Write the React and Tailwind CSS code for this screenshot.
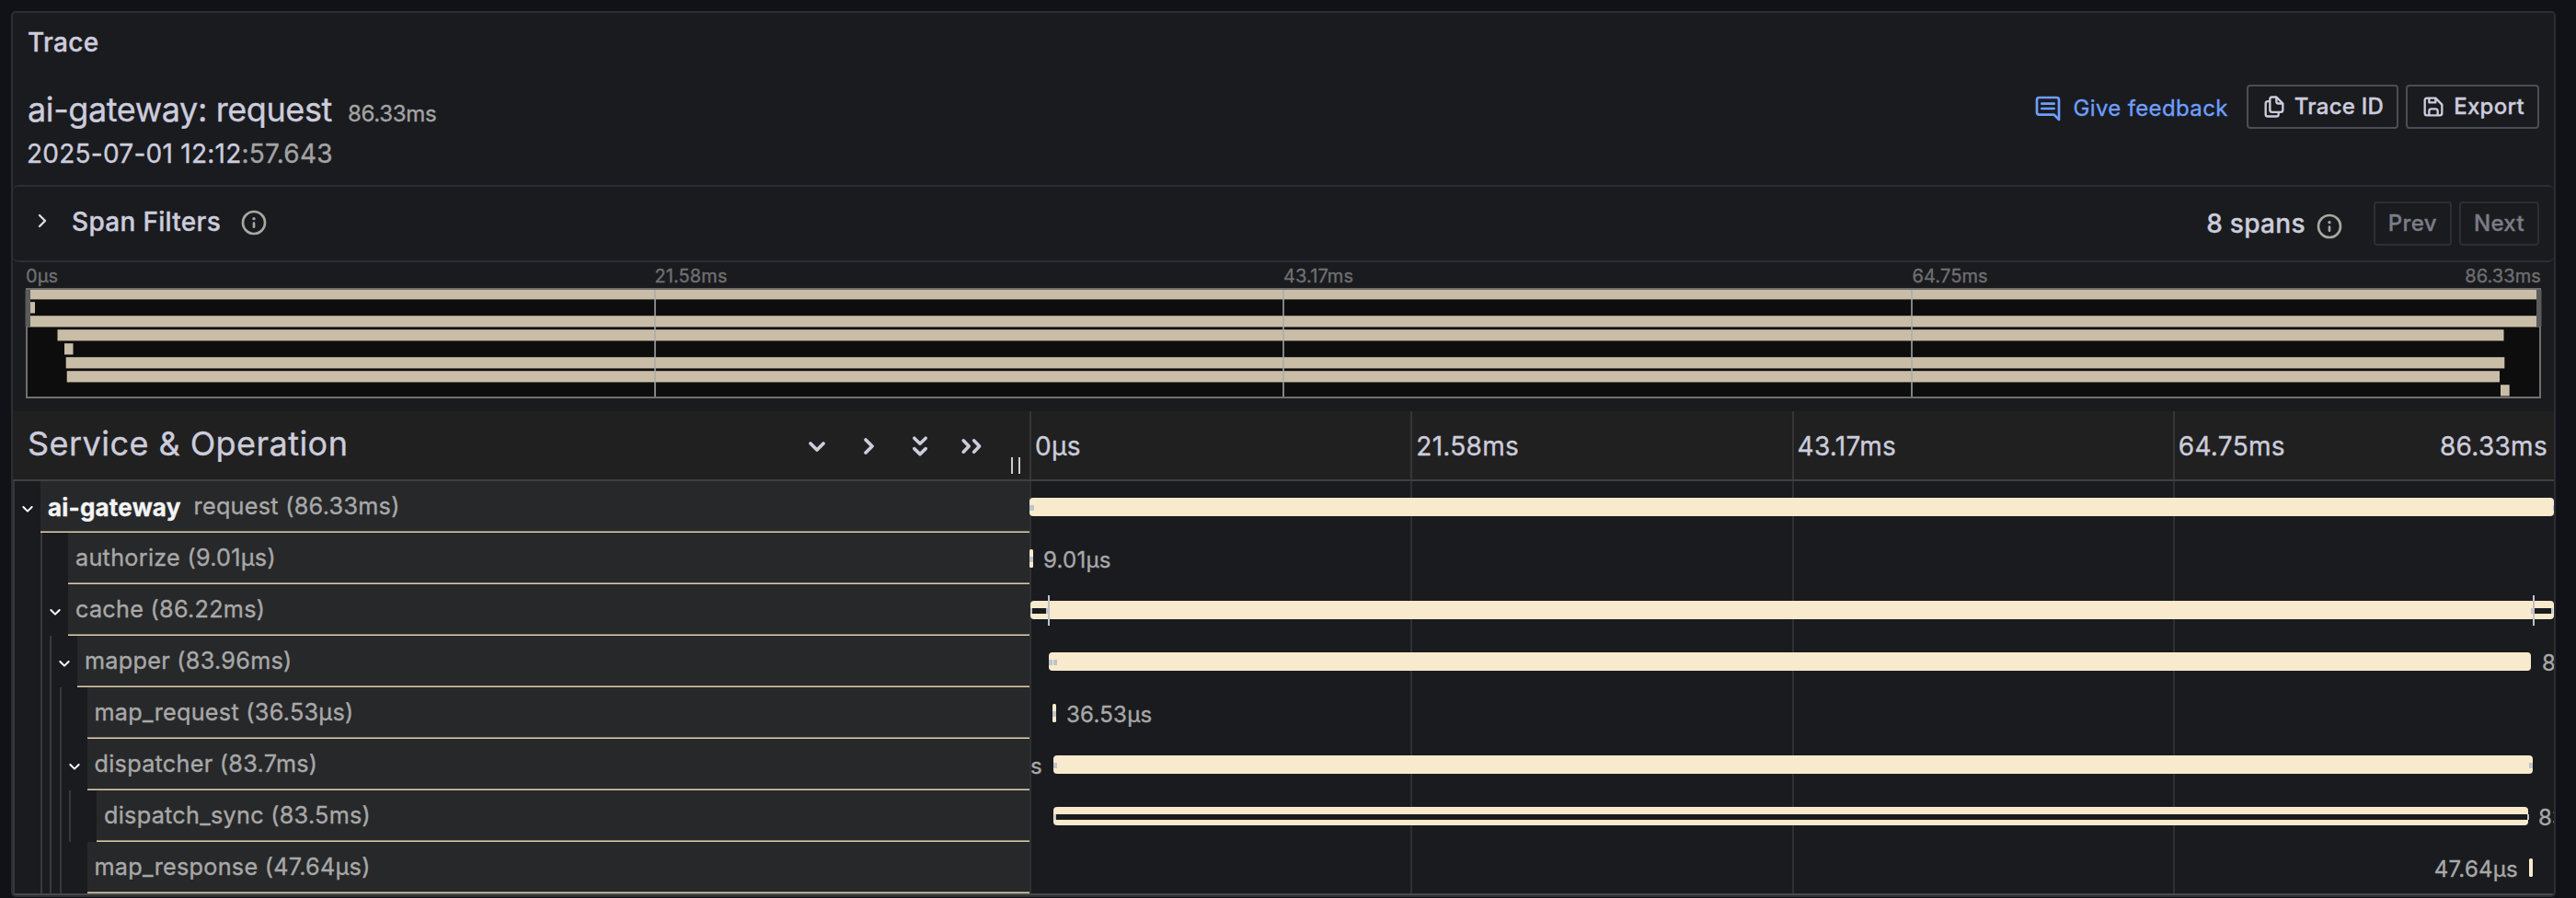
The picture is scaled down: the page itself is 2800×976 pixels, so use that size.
import React from "react";

const ANGLES = {
  down: "M5 9 L12 16 L19 9",
  right: "M9 5 L16 12 L9 19",
  thin: "M9 6 L15 12 L9 18",
};

function Angle({ dir, className, width = 3 }) {
  return (
    <svg viewBox="0 0 24 24" className={className} fill="none" stroke="currentColor" strokeWidth={width} strokeLinecap="round" strokeLinejoin="round">
      <path d={ANGLES[dir]} />
    </svg>
  );
}

function Glyph({ d, className }) {
  return (
    <svg viewBox="0 0 24 24" className={className} fill="currentColor">
      <path d={d} />
    </svg>
  );
}

const INFO =
  "M12,2A10,10,0,1,0,22,12,10,10,0,0,0,12,2Zm0,18a8,8,0,1,1,8-8A8,8,0,0,1,12,20Zm0-8.5a1,1,0,0,0-1,1v3a1,1,0,0,0,2,0v-3A1,1,0,0,0,12,11.5Zm0-4a1.25,1.25,0,1,0,1.25,1.25A1.25,1.25,0,0,0,12,7.5Z";
const COMMENT =
  "M17,7H7A1,1,0,0,0,7,9H17a1,1,0,0,0,0-2Zm0,4H7a1,1,0,0,0,0,2H17a1,1,0,0,0,0-2Zm2-9H5A3,3,0,0,0,2,5V15a3,3,0,0,0,3,3H16.59l3.7,3.71A1,1,0,0,0,21,22a.84.84,0,0,0,.38-.08A1,1,0,0,0,22,21V5A3,3,0,0,0,19,2Zm1,16.59-2.29-2.3A1,1,0,0,0,17,16H5a1,1,0,0,1-1-1V5A1,1,0,0,1,5,4H19a1,1,0,0,1,1,1Z";
const COPY =
  "M21,8.94a1.31,1.31,0,0,0-.06-.27l0-.09a1.07,1.07,0,0,0-.19-.28h0l-6-6h0a1.07,1.07,0,0,0-.28-.19.32.32,0,0,0-.09,0A.88.88,0,0,0,14.05,2H10A3,3,0,0,0,7,5V6H6A3,3,0,0,0,3,9V19a3,3,0,0,0,3,3h8a3,3,0,0,0,3-3V18h1a3,3,0,0,0,3-3V9S21,9,21,8.94ZM15,5.41,17.59,8H16a1,1,0,0,1-1-1ZM15,19a1,1,0,0,1-1,1H6a1,1,0,0,1-1-1V9A1,1,0,0,1,6,8H7v7a3,3,0,0,0,3,3h5Zm4-4a1,1,0,0,1-1,1H10a1,1,0,0,1-1-1V5a1,1,0,0,1,1-1h3V7a3,3,0,0,0,3,3h3Z";
const SAVE =
  "M20.71,9.29l-6-6a1,1,0,0,0-.32-.21A1.09,1.09,0,0,0,14,3H6A3,3,0,0,0,3,6V18a3,3,0,0,0,3,3H18a3,3,0,0,0,3-3V10A1,1,0,0,0,20.71,9.29ZM9,5h4V7H9Zm6,14H9V16a1,1,0,0,1,1-1h4a1,1,0,0,1,1,1Zm4-1a1,1,0,0,1-1,1H17V16a3,3,0,0,0-3-3H10a3,3,0,0,0-3,3v3H6a1,1,0,0,1-1-1V6A1,1,0,0,1,6,5H7V8A1,1,0,0,0,8,9h6a1,1,0,0,0,1-1V6.41l4,4Z";

function Header() {
  return (
    <header className="flex h-[187px] shrink-0 flex-col pl-4 pr-4">
      <h2 className="pt-[11px] text-[28px] leading-[42px] font-medium tracking-[0.3px]">Trace</h2>
      <div className="flex justify-between">
        <div className="pt-[29px]">
          <div className="flex items-baseline gap-[17px] leading-[46px]">
            <h1 className="text-[36px] tracking-[-0.4px]">ai-gateway: request</h1>
            <span className="text-[24px] tracking-[-0.3px] text-[#a3a3a3]">86.33ms</span>
          </div>
          <div className="-mt-[5px] -ml-px text-[28px] leading-[50px] tracking-[0.25px]">
            2025-07-01 12:12<span className="text-[#a3a3a3]">:57.643</span>
          </div>
        </div>
        <div className="flex items-start pt-[25px]">
          <a className="mr-[20px] flex h-12 items-center gap-[11px] pt-[3px] text-[24px] tracking-[0.36px] text-[#6e9fff]">
            <Glyph d={COMMENT} className="size-8" />
            Give feedback
          </a>
          <button className="mr-2 flex h-12 items-center gap-2 rounded-[4px] border-2 border-[#4c4d54] px-[14px] pb-px text-[24px] font-medium tracking-[0.26px]">
            <Glyph d={COPY} className="mt-px size-7" />
            Trace ID
          </button>
          <button className="flex h-12 items-center gap-2 rounded-[4px] border-2 border-[#4c4d54] px-[14px] pb-px text-[24px] font-medium tracking-[0.3px]">
            <Glyph d={SAVE} className="mt-px size-7" />
            Export
          </button>
        </div>
      </div>
    </header>
  );
}

function SpanFilters() {
  return (
    <section className="flex h-[84px] shrink-0 items-center rounded-[6px] border-y-2 border-[#2d2e33] pl-5 pr-4">
      <Angle dir="thin" className="-mt-[6px] size-6 text-[#dcdce6]" width={2.4} />
      <h3 className="-mt-[4px] ml-[20px] text-[28px] font-medium tracking-[0.3px]">Span Filters</h3>
      <Glyph d={INFO} className="-mt-[2px] ml-[20px] size-8 text-[#a8a8a0]" />
      <div className="ml-auto flex items-center text-[28px] font-medium tracking-[0.3px]">8 spans</div>
      <Glyph d={INFO} className="mt-[6px] ml-[10px] size-8 text-[#a8a8a0]" />
      <button className="ml-8 h-12 rounded-[4px] border-2 border-[#2d2e33] px-[14px] pb-[1px] text-[24px] font-medium tracking-[0.35px] text-[#7c7c87]">Prev</button>
      <button className="ml-2 h-12 rounded-[4px] border-2 border-[#2d2e33] px-[14px] pb-[1px] text-[24px] font-medium tracking-[0.35px] text-[#7c7c87]">Next</button>
    </section>
  );
}

const TICKS = ["0μs", "21.58ms", "43.17ms", "64.75ms"];

/* [left, right] of every span in the overview, in px of its 2734px width */
const OVERVIEW = [
  [2, 2732],
  [2, 10],
  [2, 2732],
  [34.5, 2693.5],
  [42, 51.5],
  [43.7, 2694.3],
  [44.7, 2689],
  [2690, 2699.7],
];

function Overview() {
  return (
    <section className="h-[162px] shrink-0 px-[14px] pt-[3px]">
      <div className="flex h-[25px] text-[20px] leading-[24px] tracking-[0.1px] text-[#6f6f70]">
        {TICKS.map((t, i) => (
          <span key={t} className="flex-1">
            {t}
            {i === 3 && <span className="float-right">86.33ms</span>}
          </span>
        ))}
      </div>
      <svg width="2734" height="120" viewBox="0 0 2734 120" className="block overflow-visible">
        <rect x="1" y="1" width="2732" height="118" fill="#0d0d0d" />
        {OVERVIEW.map(([a, b], i) => (
          <rect key={i} x={a} y={i * 15 + 0.2} width={b - a} height="12.2" fill="#c9bda7" />
        ))}
        {[684, 1367, 2050].map((x) => (
          <rect key={x} x={x - 0.75} y="2" width="1.5" height="116" fill="#a9aaab" />
        ))}
        <rect x="1" y="1" width="2732" height="118" fill="none" stroke="#6f6f6f" strokeWidth="2" />
        <rect x="-0.5" y="2" width="5.5" height="40" fill="#5b5b5b" />
        <rect x="2729" y="2" width="5.5" height="40" fill="#5b5b5b" />
      </svg>
    </section>
  );
}

function TableHeader() {
  return (
    <div className="flex h-[76px] shrink-0 border-b-2 border-[#404041] bg-[#202020]">
      <div className="flex w-[1105px] shrink-0 items-center pl-[16px]">
        <h3 className="-mt-[4px] text-[36px] tracking-[0.45px]">Service &amp; Operation</h3>
        <div className="ml-auto flex items-center gap-8 pt-[2px]">
          <Angle dir="down" className="size-6 overflow-visible" width={3.8} />
          <Angle dir="right" className="size-6 overflow-visible" width={3.8} />
          <svg viewBox="0 0 24 24" className="size-6 overflow-visible" fill="none" stroke="currentColor" strokeWidth="3.6" strokeLinecap="round" strokeLinejoin="round">
            <path d="M5.8 3.2 L12 9.2 L18.2 3.2 M5.8 14.6 L12 20.6 L18.2 14.6" />
          </svg>
          <svg viewBox="0 0 24 24" className="size-6 overflow-visible" fill="none" stroke="currentColor" strokeWidth="3.6" strokeLinecap="round" strokeLinejoin="round">
            <path d="M3.2 5.8 L9.2 12 L3.2 18.2 M14.6 5.8 L20.6 12 L14.6 18.2" />
          </svg>
        </div>
        <div className="mt-auto mb-[6px] ml-[31px] mr-[10px] h-[18px] w-[10px] border-x-2 border-[#cccccc]" />
      </div>
      {TICKS.map((t, i) => (
        <div key={t} className="flex flex-1 items-center border-l-2 border-[#363636] pt-px pl-1 pr-[7px] text-[28px] tracking-[0.3px]">
          {t}
          {i === 3 && <span className="ml-auto">86.33ms</span>}
        </div>
      ))}
    </div>
  );
}

/*
 * guides: indentation guide lines; left: left edge of the name cell.
 * bar / marks / path: [left, right] offsets in the 1657px wide timeline.
 */
const SPANS = [
  { name: "request (86.33ms)", service: "ai-gateway", left: 28, open: true, guides: [], bar: [0, 1657], marks: [[0, 5], [1656, 1657]] },
  { name: "authorize (9.01μs)", left: 58, guides: [28], bar: [0, 4], marks: [[0, 4]], label: "9.01μs", at: 15 },
  { name: "cache (86.22ms)", left: 58, open: true, guides: [28], bar: [1, 1657], marks: [[1, 3], [18, 20], [1632, 1634], [1654, 1656]], path: [[3, 18.5], [1634, 1654]], logs: [20, 1634] },
  { name: "mapper (83.96ms)", left: 68, open: true, guides: [28, 38], bar: [21, 1632], marks: [[21, 25], [26, 30]], label: "83.96ms", at: 1644 },
  { name: "map_request (36.53μs)", left: 78.5, guides: [28, 38, 49], bar: [25, 29], marks: [[25, 29]], label: "36.53μs", at: 40 },
  { name: "dispatcher (83.7ms)", left: 78.5, open: true, guides: [28, 38, 49], bar: [26, 1634], marks: [[26, 30], [1630, 1634]], label: "83.7ms", end: 14 },
  { name: "dispatch_sync (83.5ms)", left: 89, guides: [28, 38, 49, 59], bar: [26, 1629], marks: [[27, 29], [1628, 1630]], path: [[29, 1628]], label: "83.5ms", at: 1640 },
  { name: "map_response (47.64μs)", left: 78.5, guides: [28, 38, 49], bar: [1630, 1634], marks: [], label: "47.64μs", end: 1618 },
];

function NameColumn({ span }) {
  return (
    <div className="relative flex w-[1105px] shrink-0">
      {span.guides.map((g) => (
        <i key={g} className="absolute top-0 h-full w-[2px] bg-[#38393a]" style={{ left: g + 2 }} />
      ))}
      <div className="flex shrink-0 items-center justify-end pr-[6px] pt-[3px]" style={{ width: span.left + 2 }}>
        {span.open && <Angle dir="down" className="size-[16px] shrink-0 overflow-visible text-white" width={3} />}
      </div>
      <div className="flex flex-1 items-center border-b border-[#dccba8] bg-[#27282a] pt-px pl-2 whitespace-pre shadow-[inset_0_-1px_0_#8e8577]">
        {span.service && <b className="mr-[14px] text-[26px] font-bold tracking-[0.2px] text-[#f4f4f4]">{span.service}</b>}
        <span className="text-[25.2px] tracking-[0.29px] text-[#a8a8a8]">{span.name}</span>
      </div>
    </div>
  );
}

function Timeline({ span }) {
  const [a, b] = span.bar;
  return (
    <div className="relative flex flex-1 overflow-hidden">
      {[0, 1, 2, 3].map((i) => (
        <i key={i} className="flex-1 border-l-2 border-[#303031]" />
      ))}
      {span.label && (
        <span
          className="absolute top-[15px] text-[24px] leading-[30px] tracking-[0.25px] text-[#a8a8a8]"
          style={span.end ? { right: 1657 - span.end } : { left: span.at }}
        >
          {span.label}
        </span>
      )}
      {span.end === 14 && <i className="absolute left-0 top-0 h-full w-[2px] bg-[#303031]" />}
      <i className={`absolute top-[18px] h-5 bg-[#f8eacd] ${b - a < 6 ? "rounded-[1.5px]" : "rounded-[4px]"}`} style={{ left: a, width: b - a }} />
      {(span.path || []).map(([l, r]) => (
        <i key={l} className="absolute top-[26px] h-[6px] bg-[#1a1b1c]" style={{ left: l, width: r - l }} />
      ))}
      {span.marks.map(([l, r]) => (
        <i key={l} className="absolute top-[26px] h-[6px] bg-[#c0c4c8]" style={{ left: l, width: r - l }} />
      ))}
      {(span.logs || []).map((l) => (
        <i key={l} className="absolute top-[12px] h-[33px] w-[2px] bg-[#c0c4c8]" style={{ left: l }} />
      ))}
    </div>
  );
}

export default function App() {
  return (
    <div className="h-[976px] w-[2800px] overflow-hidden bg-[#111217] pt-3 pl-3 font-['Inter',sans-serif] text-[#ccccdc] [-webkit-text-stroke:0.35px]">
      <div className="flex h-[963px] w-[2766px] flex-col overflow-hidden rounded-[5px] border-2 border-[#2d2e33] bg-[#1a1b1f]">
        <Header />
        <SpanFilters />
        <Overview />
        <TableHeader />
        <div className="flex h-[450px] shrink-0 flex-col border-b-2 border-[#48494a]">
          {SPANS.map((s) => (
            <div key={s.name} className="flex h-14 shrink-0 shadow-[inset_2px_0_0_#36373b]">
              <NameColumn span={s} />
              <Timeline span={s} />
            </div>
          ))}
        </div>
      </div>
    </div>
  );
}
